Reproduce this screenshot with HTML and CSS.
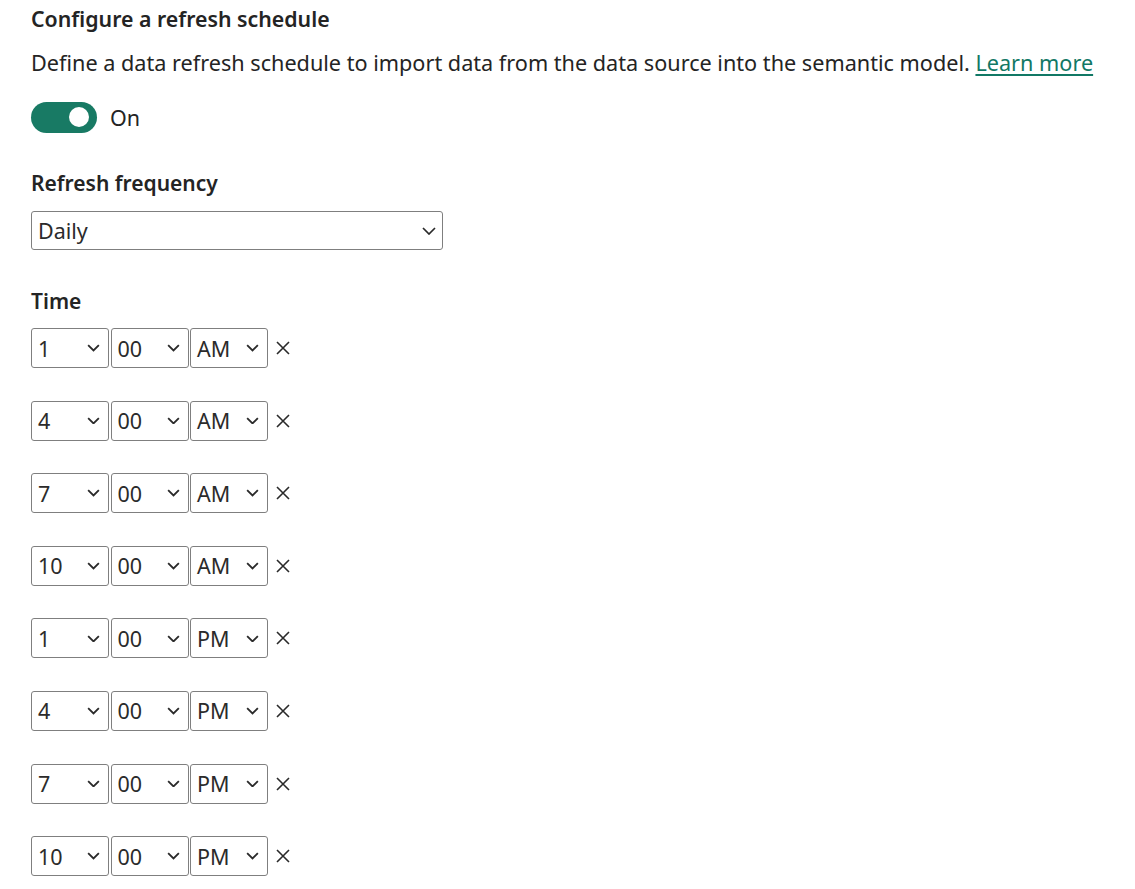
FILE: index.html
```html
<!DOCTYPE html>
<html>
<head>
<meta charset="utf-8">
<link rel="stylesheet" href="styles.css">
</head>
<body>
<div class="page">
  <h2 class="title">Configure a refresh schedule</h2>
  <p class="desc">Define a data refresh schedule to import data from the data source into the semantic model. <a class="link" href="#">Learn more</a></p>
  <div class="toggle-row">
    <span class="toggle"><span class="knob"></span></span>
    <span class="toggle-label">On</span>
  </div>
  <div class="label freq-label">Refresh frequency</div>
  <div class="select wide"><span class="val">Daily</span><svg class="chev chev-wide" viewBox="0 0 14 8"><path d="M1 1 L7 7 L13 1" /></svg></div>
  <div class="label time-label">Time</div>
  <div class="times">
    <div class="trow"><div class="select sm"><span class="val">1</span><svg class="chev" viewBox="0 0 12 7"><path d="M1 1 L6 6 L11 1" /></svg></div><div class="select sm"><span class="val">00</span><svg class="chev" viewBox="0 0 12 7"><path d="M1 1 L6 6 L11 1" /></svg></div><div class="select sm"><span class="val">AM</span><svg class="chev" viewBox="0 0 12 7"><path d="M1 1 L6 6 L11 1" /></svg></div><svg class="x" viewBox="0 0 14 14"><path d="M1 1 L13 13 M13 1 L1 13" /></svg></div>
    <div class="trow"><div class="select sm"><span class="val">4</span><svg class="chev" viewBox="0 0 12 7"><path d="M1 1 L6 6 L11 1" /></svg></div><div class="select sm"><span class="val">00</span><svg class="chev" viewBox="0 0 12 7"><path d="M1 1 L6 6 L11 1" /></svg></div><div class="select sm"><span class="val">AM</span><svg class="chev" viewBox="0 0 12 7"><path d="M1 1 L6 6 L11 1" /></svg></div><svg class="x" viewBox="0 0 14 14"><path d="M1 1 L13 13 M13 1 L1 13" /></svg></div>
    <div class="trow"><div class="select sm"><span class="val">7</span><svg class="chev" viewBox="0 0 12 7"><path d="M1 1 L6 6 L11 1" /></svg></div><div class="select sm"><span class="val">00</span><svg class="chev" viewBox="0 0 12 7"><path d="M1 1 L6 6 L11 1" /></svg></div><div class="select sm"><span class="val">AM</span><svg class="chev" viewBox="0 0 12 7"><path d="M1 1 L6 6 L11 1" /></svg></div><svg class="x" viewBox="0 0 14 14"><path d="M1 1 L13 13 M13 1 L1 13" /></svg></div>
    <div class="trow"><div class="select sm"><span class="val">10</span><svg class="chev" viewBox="0 0 12 7"><path d="M1 1 L6 6 L11 1" /></svg></div><div class="select sm"><span class="val">00</span><svg class="chev" viewBox="0 0 12 7"><path d="M1 1 L6 6 L11 1" /></svg></div><div class="select sm"><span class="val">AM</span><svg class="chev" viewBox="0 0 12 7"><path d="M1 1 L6 6 L11 1" /></svg></div><svg class="x" viewBox="0 0 14 14"><path d="M1 1 L13 13 M13 1 L1 13" /></svg></div>
    <div class="trow"><div class="select sm"><span class="val">1</span><svg class="chev" viewBox="0 0 12 7"><path d="M1 1 L6 6 L11 1" /></svg></div><div class="select sm"><span class="val">00</span><svg class="chev" viewBox="0 0 12 7"><path d="M1 1 L6 6 L11 1" /></svg></div><div class="select sm"><span class="val">PM</span><svg class="chev" viewBox="0 0 12 7"><path d="M1 1 L6 6 L11 1" /></svg></div><svg class="x" viewBox="0 0 14 14"><path d="M1 1 L13 13 M13 1 L1 13" /></svg></div>
    <div class="trow"><div class="select sm"><span class="val">4</span><svg class="chev" viewBox="0 0 12 7"><path d="M1 1 L6 6 L11 1" /></svg></div><div class="select sm"><span class="val">00</span><svg class="chev" viewBox="0 0 12 7"><path d="M1 1 L6 6 L11 1" /></svg></div><div class="select sm"><span class="val">PM</span><svg class="chev" viewBox="0 0 12 7"><path d="M1 1 L6 6 L11 1" /></svg></div><svg class="x" viewBox="0 0 14 14"><path d="M1 1 L13 13 M13 1 L1 13" /></svg></div>
    <div class="trow"><div class="select sm"><span class="val">7</span><svg class="chev" viewBox="0 0 12 7"><path d="M1 1 L6 6 L11 1" /></svg></div><div class="select sm"><span class="val">00</span><svg class="chev" viewBox="0 0 12 7"><path d="M1 1 L6 6 L11 1" /></svg></div><div class="select sm"><span class="val">PM</span><svg class="chev" viewBox="0 0 12 7"><path d="M1 1 L6 6 L11 1" /></svg></div><svg class="x" viewBox="0 0 14 14"><path d="M1 1 L13 13 M13 1 L1 13" /></svg></div>
    <div class="trow"><div class="select sm"><span class="val">10</span><svg class="chev" viewBox="0 0 12 7"><path d="M1 1 L6 6 L11 1" /></svg></div><div class="select sm"><span class="val">00</span><svg class="chev" viewBox="0 0 12 7"><path d="M1 1 L6 6 L11 1" /></svg></div><div class="select sm"><span class="val">PM</span><svg class="chev" viewBox="0 0 12 7"><path d="M1 1 L6 6 L11 1" /></svg></div><svg class="x" viewBox="0 0 14 14"><path d="M1 1 L13 13 M13 1 L1 13" /></svg></div>
  </div>
</div>
</body>
</html>
```

FILE: styles.css
```css
html, body {
  margin: 0;
  padding: 0;
  background: #ffffff;
}
body {
  font-family: "Noto Sans", "Open Sans", sans-serif;
  color: #242424;
}
.page {
  padding: 4px 0 0 31px;
}
.title {
  margin: 0;
  font-size: 21.3px;
  font-weight: 600;
  line-height: 30px;
}
.desc {
  margin: 14px 0 0 0;
  font-size: 21.65px;
  line-height: 30px;
}
.link {
  color: #117865;
  text-decoration: underline;
  text-decoration-thickness: 1.5px;
  text-underline-offset: 3px;
}
.toggle-row {
  display: flex;
  align-items: center;
  margin-top: 23px;
  height: 32px;
}
.toggle {
  width: 66px;
  height: 31px;
  border-radius: 16px;
  background: #187a64;
  display: flex;
  align-items: center;
  justify-content: flex-end;
  padding-right: 8px;
  box-sizing: border-box;
}
.knob {
  width: 20px;
  height: 20px;
  border-radius: 50%;
  background: #ffffff;
}
.toggle-label {
  margin-left: 13px;
  font-size: 21.5px;
}
.label {
  font-size: 21px;
  font-weight: 600;
  line-height: 30px;
}
.freq-label {
  margin-top: 35px;
}
.select {
  display: flex;
  align-items: center;
  justify-content: space-between;
  border: 1px solid #7f7f7f;
  border-radius: 3px;
  box-sizing: border-box;
  background: #fff;
}
.val {
  font-size: 21.5px;
  color: #2b2b2b;
}
.select.wide {
  width: 412px;
  height: 39px;
  margin-top: 13px;
  padding: 0 6px 0 6px;
}
.chev {
  width: 13px;
  height: 7.5px;
  fill: none;
  stroke: #2a2a2a;
  stroke-width: 1.7;
}
.chev.chev-wide {
  width: 14px;
  height: 8px;
}
.time-label {
  margin-top: 36px;
}
.times {
  display: flex;
  flex-direction: column;
  gap: 32.6px;
  margin-top: 12px;
}
.trow {
  display: flex;
  align-items: center;
  gap: 1.5px;
  height: 40px;
}
.select.sm {
  width: 78px;
  height: 40px;
  padding: 0 8px 0 6px;
}
.x {
  width: 14px;
  height: 14px;
  margin-left: 6px;
  fill: none;
  stroke: #2a2a2a;
  stroke-width: 1.6;
}
```
